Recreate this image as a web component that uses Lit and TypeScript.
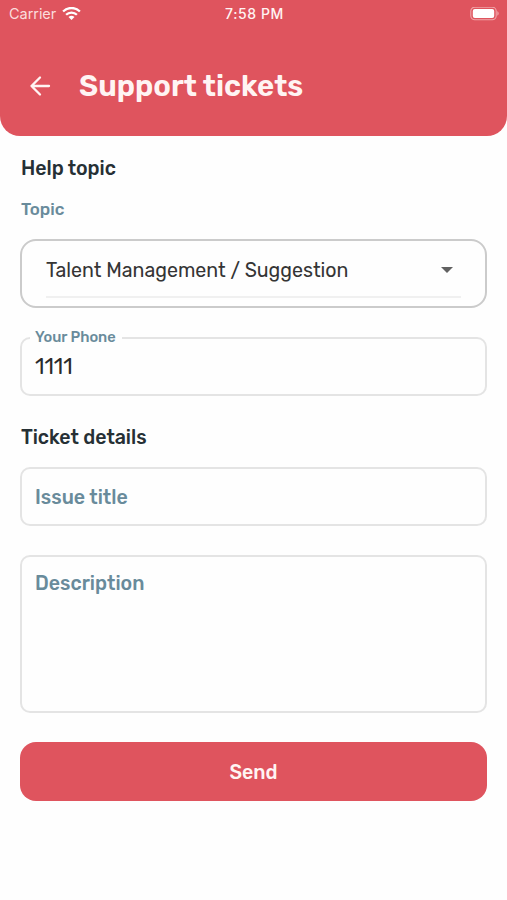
import { LitElement, html, css } from "lit";
import { customElement } from "lit/decorators.js";

@customElement("app-root")
export class AppRoot extends LitElement {
  static styles = css`
    :host {
      display: block;
      height: 900px;
      overflow: hidden;
      background: #fefefe;
      color: #263035;
      font-family: Rubik, Roboto, "Liberation Sans", sans-serif;
    }
    * { box-sizing: border-box; }
    svg { display: block; flex: none; }
    span, h1, h2 { white-space: nowrap; }
    .header {
      height: 136px;
      background: #df545e;
      border-radius: 0 0 20px 20px;
      color: #fff4f3;
    }
    .status {
      height: 28px;
      display: grid;
      grid-template-columns: 1fr auto 1fr;
      align-items: center;
      padding: 0 7px 0 9px;
      font: 400 14.5px/28px Inter, sans-serif;
    }
    .carrier { display: flex; align-items: center; gap: 6px; color: #fbdcdc; }
    .carrier-name { letter-spacing: -0.05px; }
    .time { font-size: 14px; font-weight: 500; letter-spacing: 0.6px; }
    .battery { justify-self: end; }
    .bar { display: flex; align-items: center; height: 60px; margin-top: 28px; padding-left: 29px; gap: 28px; }
    h1 { margin: 0; font-size: 29.4px; font-weight: 600; line-height: 36px; }
    h2 { margin: 0; font-size: 19.6px; font-weight: 500; line-height: 24px; padding-top: 1px; letter-spacing: -0.05px; }
    .form { padding: 20px 20px 0; display: flex; flex-direction: column; }
    .form h2 { padding-left: 1px; }
    .topic { margin: 16px 0 0 1px; font-size: 17px; line-height: 24px; font-weight: 500; color: #698b9b; }
    .select {
      margin-top: 18px;
      height: 69px;
      border: 2px solid #cbcbcb;
      border-radius: 16px;
      padding: 9px 24px;
    }
    .select-line {
      height: 48px;
      border-bottom: 2px solid #f0f0f0;
      display: flex;
      align-items: center;
      justify-content: space-between;
      padding: 0 8px 6px 0;
      font-size: 19.6px;
      letter-spacing: -0.01px;
      color: #353535;
    }
    .field {
      position: relative;
      height: 59px;
      border: 2px solid #e4e4e4;
      border-radius: 10px;
      padding: 2px 13px 0;
      display: flex;
      align-items: center;
      font-size: 19.6px;
      font-weight: 500;
      color: #698b9b;
    }
    .phone { margin: 29px 0; padding-top: 0; color: #2b2b2b; font-size: 22px; font-weight: 400; }
    .phone-label {
      position: absolute;
      left: 8px;
      top: -12px;
      padding: 0 6px 0 5px;
      background: #fefefe;
      color: #698b9b;
      font-size: 14.7px;
      font-weight: 500;
      line-height: 20px;
    }
    .issue { margin-top: 17px; }
    .description { margin-top: 29px; height: 158px; align-items: flex-start; padding-top: 15px; line-height: 24px; }
    .send {
      margin-top: 29px;
      height: 59px;
      border: 0;
      border-radius: 16px;
      padding: 2px 0 0;
      background: #df545e;
      color: #fff4f3;
      font: 500 19.6px Rubik, Roboto, sans-serif;
    }
  `;

  render() {
    return html`
      <header class="header">
        <div class="status">
          <div class="carrier">
            <span class="carrier-name">Carrier</span>
            <svg width="19" height="15" viewBox="0 0 19 15" fill="none" stroke="#fff" stroke-width="2.3">
              <path d="M1.1 4.5a11.8 11.8 0 0 1 16.8 0M4.1 7.8a7.6 7.6 0 0 1 10.8 0" />
              <path d="M9.5 13.1 6.5 10.1a4.3 4.3 0 0 1 6 0z" fill="#fff" stroke="none" />
            </svg>
          </div>
          <span class="time">7:58 PM</span>
          <svg class="battery" width="30" height="14" viewBox="0 0 30 14">
            <rect x=".8" y=".1" width="25.4" height="12.6" rx="4" fill="none" stroke="#f0a5a9" stroke-width="1.1" />
            <rect x="2.8" y="1.9" width="21.4" height="9" rx="2" fill="#fff" />
            <path d="M27.3 4.3v4.4c1.9-.7 1.9-3.7 0-4.4z" fill="#f0a5a9" />
          </svg>
        </div>
        <div class="bar">
          <svg width="22" height="22" viewBox="0 0 22 22" fill="none" stroke="#fff4f3" stroke-width="2.3" stroke-linecap="round" stroke-linejoin="round">
            <path d="M20 11H2.5M11 2.5 2.5 11l8.5 8.5" />
          </svg>
          <h1>Support tickets</h1>
        </div>
      </header>
      <main class="form">
        <h2>Help topic</h2>
        <span class="topic">Topic</span>
        <div class="select">
          <div class="select-line">
            <span>Talent Management / Suggestion</span>
            <svg width="12" height="6" viewBox="0 0 12 6"><path d="M0 0h12L6 6z" fill="#616161" /></svg>
          </div>
        </div>
        <div class="field phone">
          <span class="phone-label">Your Phone</span>
          <span>1111</span>
        </div>
        <h2>Ticket details</h2>
        <div class="field issue"><span>Issue title</span></div>
        <div class="field description"><span>Description</span></div>
        <button class="send">Send</button>
      </main>
    `;
  }
}
